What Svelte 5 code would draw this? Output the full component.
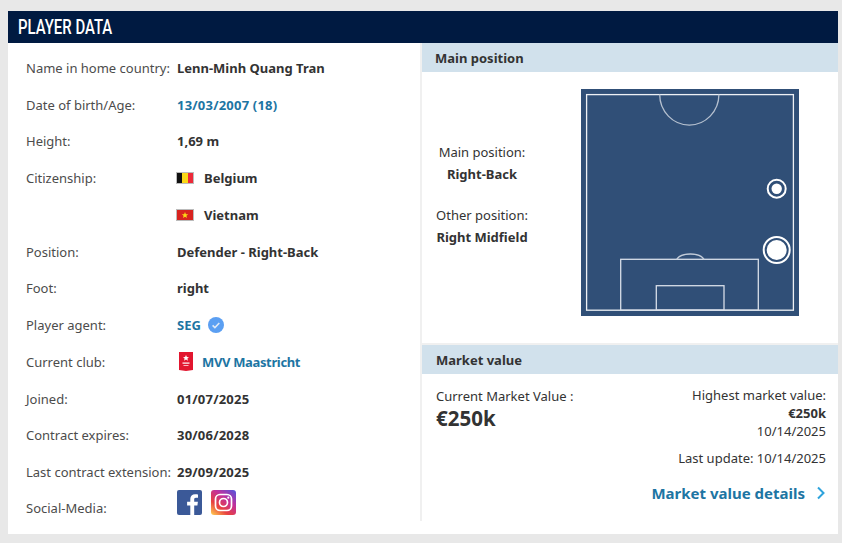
<script>
  const rows = [
    { label: "Name in home country:", value: "Lenn-Minh Quang Tran" },
    { label: "Date of birth/Age:", value: "13/03/2007 (18)", link: true, num: true },
    { label: "Height:", value: "1,69 m" },
    { label: "Citizenship:", value: "Belgium", flag: "be" },
    { label: "", value: "Vietnam", flag: "vn" },
    { label: "Position:", value: "Defender - Right-Back" },
    { label: "Foot:", value: "right" },
    { label: "Player agent:", value: "SEG", link: true, verified: true },
    { label: "Current club:", value: "MVV Maastricht", link: true, club: true },
    { label: "Joined:", value: "01/07/2025", num: true },
    { label: "Contract expires:", value: "30/06/2028", num: true },
    { label: "Last contract extension:", value: "29/09/2025", num: true },
  ]
</script>

<div class="page">
  <section class="card">
    <h2 class="title"><span>PLAYER DATA</span></h2>
    <div class="columns">
      <div class="data">
        {#each rows as row}
          <div class="row">
            <span class="label">{row.label}</span>
            <span class="value" class:link={row.link} class:num={row.num} class:tight={row.club}>
              {#if row.flag === "be"}
                <svg class="flag" viewBox="0 0 18 12" aria-hidden="true">
                  <rect width="6" height="12" fill="#111" />
                  <rect x="6" width="6" height="12" fill="#fad817" />
                  <rect x="12" width="6" height="12" fill="#ed2939" />
                </svg>
              {:else if row.flag === "vn"}
                <svg class="flag" viewBox="0 0 18 12" aria-hidden="true">
                  <rect width="18" height="12" fill="#d8231f" />
                  <polygon points="9,3 9.9,5.2 12.2,5.3 10.4,6.8 11,9 9,7.8 7,9 7.6,6.8 5.8,5.3 8.1,5.2" fill="#fbd716" />
                </svg>
              {:else if row.club}
                <svg class="crest" viewBox="0 0 14 19" aria-hidden="true">
                  <path d="M0 0h14v18l-7 1-7-1z" fill="#e2162f" />
                  <path d="M7 3l.9 2 2.1.2-1.600 1.400.5 2.100L7 7.600 5.100 8.700l.5-2.100L4 5.200l2.100-.2z" fill="#fff" />
                  <rect x="3.500" y="10.500" width="7" height="1.200" fill="#fff" />
                  <rect x="4.500" y="13" width="5" height="1" fill="#f7b7bf" />
                </svg>
              {/if}
              <span>{row.value}</span>
              {#if row.verified}
                <svg class="check" viewBox="0 0 16 16" aria-hidden="true">
                  <circle cx="8" cy="8" r="8" fill="#5b9ff2" />
                  <path d="M4.600 8.400l2.300 2.200 4.400-4.600" fill="none" stroke="#dfe9f6" stroke-width="1.600" />
                </svg>
              {/if}
            </span>
          </div>
        {/each}
        <div class="row social">
          <span class="label">Social-Media:</span>
          <span class="icons">
            <svg viewBox="0 0 25 25" aria-hidden="true">
              <rect width="25" height="25" rx="2" fill="#3b5998" />
              <path d="M17.200 25v-9.500h3.200l.5-3.700h-3.700V9.500c0-1.100.3-1.800 1.800-1.800h2V4.400c-.4 0-1.500-.2-2.900-.2-2.800 0-4.800 1.700-4.800 4.900v2.700h-3.200v3.700h3.200V25z" fill="#fff" />
            </svg>
            <svg viewBox="0 0 25 25" aria-hidden="true">
              <defs>
                <linearGradient id="insta" x1="0.1" y1="1" x2="0.9" y2="0">
                  <stop offset="0" stop-color="#fdc04f" />
                  <stop offset="0.3" stop-color="#e8413f" />
                  <stop offset="0.65" stop-color="#c12f9c" />
                  <stop offset="1" stop-color="#5b51d8" />
                </linearGradient>
              </defs>
              <rect width="25" height="25" rx="3" fill="url(#insta)" />
              <rect x="4.500" y="4.500" width="16" height="16" rx="4.500" fill="none" stroke="#fff" stroke-width="1.700" />
              <circle cx="12.500" cy="12.500" r="4" fill="none" stroke="#fff" stroke-width="1.700" />
              <circle cx="17.300" cy="7.700" r="1.100" fill="#fff" />
            </svg>
          </span>
        </div>
      </div>

      <div class="side">
        <h3 class="sub first">Main position</h3>
        <div class="positions">
          <div class="pos-text">
            <div class="pos-block">
              <span>Main position:</span>
              <strong>Right-Back</strong>
            </div>
            <div class="pos-block">
              <span>Other position:</span>
              <strong>Right Midfield</strong>
            </div>
          </div>
          <svg class="pitch" viewBox="0 0 218 227" aria-label="Pitch">
            <rect width="218" height="227" fill="#304f77" />
            <g fill="none" stroke="#d7dee8" stroke-width="1.300">
              <rect x="5.600" y="5.600" width="206.800" height="215.600" stroke="#eef1f5" />
              <path d="M78.700 5.600a29.600 30.500 0 0 0 59.200 0" stroke="#b5c0cf" />
              <rect x="39.700" y="170.300" width="137.600" height="50.900" />
              <rect x="75.300" y="196.700" width="67.700" height="24.500" />
              <path d="M95.700 170.300a14.500 8 0 0 1 27.300 0" stroke="#c2ccd9" />
            </g>
            <circle cx="195.700" cy="99.700" r="9" fill="none" stroke="#fff" stroke-width="2" />
            <circle cx="195.700" cy="99.700" r="5.200" fill="#fff" />
            <circle cx="195.700" cy="161" r="13" fill="none" stroke="#fff" stroke-width="2" />
            <circle cx="195.700" cy="161" r="10" fill="#fff" />
          </svg>
        </div>

        <h3 class="sub">Market value</h3>
        <div class="market">
          <div class="market-top">
            <div class="current">
              <span>Current Market Value :</span>
              <strong>€250k</strong>
            </div>
            <div class="highest">
              <span>Highest market value:</span>
              <strong>€250k</strong>
              <span>10/14/2025</span>
            </div>
          </div>
          <p class="updated">Last update: 10/14/2025</p>
          <div class="details">
            <span>Market value details</span>
            <svg viewBox="0 0 10 14" aria-hidden="true">
              <path d="M2 1.500l5.500 5.500-5.500 5.500" fill="none" stroke="#2ea3dc" stroke-width="2" />
            </svg>
          </div>
        </div>
      </div>
    </div>
  </section>
</div>

<style>
  :global(body) {
    margin: 0;
    background: #e8e8e8;
  }

  .page {
    box-sizing: border-box;
    width: 842px;
    height: 543px;
    padding: 11px 4px 9px 8px;
    font-family: "Noto Sans", "Open Sans", sans-serif;
    font-size: 13px;
    color: #333;
  }

  .card {
    height: 523px;
    background: #fff;
    display: flex;
    flex-direction: column;
  }

  .title {
    margin: 0;
    height: 32px;
    line-height: 33px;
    padding-left: 10px;
    background: #001a41;
    color: #fff;
    font-family: "Roboto", sans-serif;
    font-size: 21px;
    font-weight: 500;
  }

  /* no condensed face installed, so squeeze Roboto */
  .title span {
    display: inline-block;
    transform: scaleX(0.71);
    transform-origin: left center;
    white-space: nowrap;
  }

  .columns {
    flex: 1;
    display: flex;
  }

  .data {
    box-sizing: border-box;
    width: 414px;
    padding: 6.500px 0 0 18px;
    border-right: 2px solid #f0f0f0;
    margin-bottom: 17px;
  }

  .row {
    display: flex;
    align-items: center;
    height: 36.750px;
  }

  .label {
    width: 151px;
    flex-shrink: 0;
    color: #4c4c4c;
    white-space: nowrap;
  }

  .value {
    display: flex;
    align-items: center;
    font-weight: 700;
    color: #333;
    white-space: nowrap;
  }

  .link {
    color: #1d75a3;
  }

  .num {
    letter-spacing: 0.2px;
  }

  .tight {
    letter-spacing: -0.350px;
  }

  .flag {
    width: 18px;
    height: 12px;
    margin-left: -1px;
    margin-right: 10px;
    outline: 1px solid #bbb;
    outline-offset: -1px;
  }

  .crest {
    width: 14px;
    height: 19px;
    margin-left: 2px;
    margin-right: 9px;
  }

  .check {
    width: 16px;
    height: 16px;
    margin-left: 7px;
  }

  .social {
    align-items: flex-start;
    height: 30px;
  }

  .social .label {
    margin-top: 8px;
  }

  .icons {
    display: flex;
    gap: 9px;
    margin-top: -1px;
  }

  .icons svg {
    width: 25px;
    height: 25px;
  }

  .side {
    flex: 1;
    display: flex;
    flex-direction: column;
  }

  .sub {
    margin: 0;
    height: 29px;
    line-height: 30px;
    padding-left: 14px;
    background: #d1e1ec;
    font-size: 13px;
    font-weight: 700;
    color: #333;
  }

  .sub.first {
    padding-left: 13px;
  }

  .positions {
    height: 273px;
    display: flex;
    box-sizing: border-box;
    padding: 17px 0 0 10px;
    border-bottom: 2px solid #f0f0f0;
  }

  .pos-text {
    width: 100px;
    margin-right: 49px;
    padding-top: 54px;
    display: flex;
    flex-direction: column;
    gap: 23px;
    text-align: center;
  }

  .pos-block {
    display: flex;
    flex-direction: column;
    gap: 4px;
  }

  .pitch {
    width: 218px;
    height: 227px;
  }

  .market {
    padding: 13px 12px 0 14px;
  }

  .market-top {
    display: flex;
    justify-content: space-between;
  }

  .current {
    display: flex;
    flex-direction: column;
  }

  .current strong {
    font-size: 20.500px;
    line-height: 26px;
  }

  .highest {
    display: flex;
    flex-direction: column;
    text-align: right;
    line-height: 17.750px;
  }

  .updated {
    margin: 9px 0 0;
    text-align: right;
  }

  .details {
    margin-top: 16px;
    display: flex;
    justify-content: flex-end;
    align-items: center;
    gap: 11px;
    font-size: 15px;
    font-weight: 700;
    color: #1d75a3;
  }

  .details svg {
    width: 10px;
    height: 14px;
  }
</style>
